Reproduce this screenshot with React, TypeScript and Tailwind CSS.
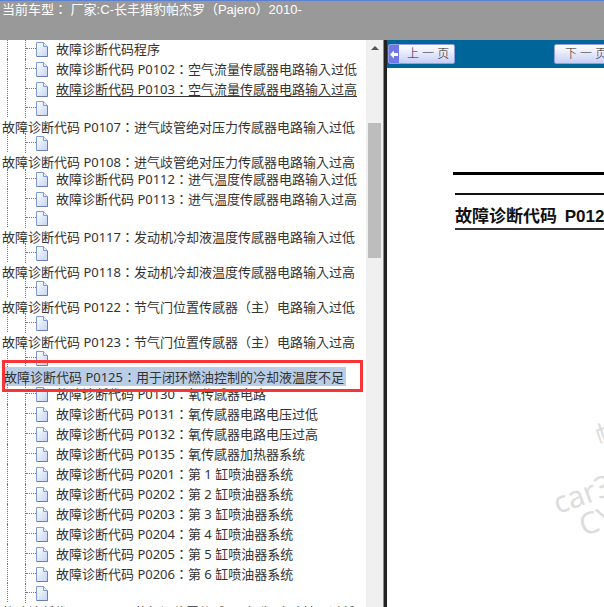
const FONT = { fontFamily: '"Noto Sans", "Noto Sans CJK TC", sans-serif' }

type Row = {
  kind: 'root' | 'leaf' | 'blank' | 'selected'
  text?: string
  h: string
  underline?: boolean
}

const rows: Row[] = [
  { kind: 'leaf', text: '故障诊断代码程序', h: 'h-5' },
  { kind: 'leaf', text: '故障诊断代码 P0102：空气流量传感器电路输入过低', h: 'h-5' },
  { kind: 'leaf', text: '故障诊断代码 P0103：空气流量传感器电路输入过高', h: 'h-[19px]', underline: true },
  { kind: 'blank', h: 'h-[19px]' },
  { kind: 'root', text: '故障诊断代码 P0107：进气歧管绝对压力传感器电路输入过低', h: 'h-4' },
  { kind: 'blank', h: 'h-[19px]' },
  { kind: 'root', text: '故障诊断代码 P0108：进气歧管绝对压力传感器电路输入过高', h: 'h-[17px]' },
  { kind: 'leaf', text: '故障诊断代码 P0112：进气温度传感器电路输入过低', h: 'h-5' },
  { kind: 'leaf', text: '故障诊断代码 P0113：进气温度传感器电路输入过高', h: 'h-[19px]' },
  { kind: 'blank', h: 'h-[19px]' },
  { kind: 'root', text: '故障诊断代码 P0117：发动机冷却液温度传感器电路输入过低', h: 'h-4' },
  { kind: 'blank', h: 'h-[19px]' },
  { kind: 'root', text: '故障诊断代码 P0118：发动机冷却液温度传感器电路输入过高', h: 'h-4' },
  { kind: 'blank', h: 'h-[19px]' },
  { kind: 'root', text: '故障诊断代码 P0122：节气门位置传感器（主）电路输入过低', h: 'h-4' },
  { kind: 'blank', h: 'h-[19px]' },
  { kind: 'root', text: '故障诊断代码 P0123：节气门位置传感器（主）电路输入过高', h: 'h-4' },
  { kind: 'blank', h: 'h-[19px]' },
  { kind: 'selected', text: '故障诊断代码 P0125：用于闭环燃油控制的冷却液温度不足', h: 'h-[17px]' },
  { kind: 'leaf', text: '故障诊断代码 P0130：氧传感器电路', h: 'h-5' },
  { kind: 'leaf', text: '故障诊断代码 P0131：氧传感器电路电压过低', h: 'h-5' },
  { kind: 'leaf', text: '故障诊断代码 P0132：氧传感器电路电压过高', h: 'h-5' },
  { kind: 'leaf', text: '故障诊断代码 P0135：氧传感器加热器系统', h: 'h-5' },
  { kind: 'leaf', text: '故障诊断代码 P0201：第 1 缸喷油器系统', h: 'h-5' },
  { kind: 'leaf', text: '故障诊断代码 P0202：第 2 缸喷油器系统', h: 'h-5' },
  { kind: 'leaf', text: '故障诊断代码 P0203：第 3 缸喷油器系统', h: 'h-5' },
  { kind: 'leaf', text: '故障诊断代码 P0204：第 4 缸喷油器系统', h: 'h-5' },
  { kind: 'leaf', text: '故障诊断代码 P0205：第 5 缸喷油器系统', h: 'h-5' },
  { kind: 'leaf', text: '故障诊断代码 P0206：第 6 缸喷油器系统', h: 'h-[19px]' },
  { kind: 'blank', h: 'h-[19px]' },
  { kind: 'root', text: '故障诊断代码 P0221：节气门位置传感器（副）电路输入过低', h: 'h-5' },
]

function PageIcon() {
  return (
    <svg width="12" height="15" viewBox="0 0 12 15" className="shrink-0">
      <defs>
        <linearGradient id="pg" x1="0" y1="0" x2="1" y2="1">
          <stop offset="0" stopColor="#ffffff" />
          <stop offset="1" stopColor="#c4d4f2" />
        </linearGradient>
      </defs>
      <path d="M0.5 0.5H7.5L11.5 4.5V14.5H0.5Z" fill="url(#pg)" stroke="#7f9bd6" />
      <path d="M7.5 0.5V4.5H11.5" fill="#e8eefb" stroke="#7f9bd6" />
      <path d="M1 14.5H11.5V5" fill="none" stroke="#6a7fb0" />
    </svg>
  )
}

function TreeRow({ row }: { row: Row }) {
  if (row.kind === 'root') {
    return (
      <div className={row.h}>
        <div className="h-5 pl-0.5 text-[13px] leading-5 whitespace-nowrap text-[#333]">{row.text}</div>
      </div>
    )
  }
  if (row.kind === 'selected') {
    return (
      <div className={row.h}>
        <div className="h-5 pl-[4px] text-[13px] leading-5 whitespace-nowrap text-[#333]">
          <span className="inline-block h-[19px] bg-[#b9cde6] pr-0.5">{row.text}</span>
        </div>
      </div>
    )
  }
  return (
    <div className={`flex ${row.h}`}>
      <div className="ml-[7px] w-[18px] border-l border-dotted border-[#777]" />
      <div className="flex h-5 items-center">
        <div className="h-full w-[11px] border-l border-dotted border-[#777]">
          <div className="mt-[9px] h-0 border-t border-dotted border-[#777]" />
        </div>
        <PageIcon />
        {row.text && (
          <span
            className={`ml-[8px] text-[13px] leading-5 whitespace-nowrap text-[#333] ${
              row.underline ? 'underline underline-offset-2' : ''
            }`}
          >
            {row.text}
          </span>
        )}
      </div>
    </div>
  )
}

function PageButton({ label, arrow }: { label: string; arrow?: boolean }) {
  return (
    <div className="flex h-[20px] w-[67px] shrink-0 items-stretch overflow-hidden rounded-[2px] border border-[#8f9fe0] bg-gradient-to-b from-[#ffffff] to-[#c9cff5]">
      {arrow ? (
        <div className="flex w-[10px] items-center justify-center bg-[#6f78e6]">
          <svg width="8" height="9" viewBox="0 0 8 9">
            <path d="M0 4.5L4 0.5V3H8V6H4V8.5Z" fill="#ffffff" />
          </svg>
        </div>
      ) : (
        <div className="w-[2px]" />
      )}
      <span className="pl-[8px] text-[12px] leading-[18px] font-light whitespace-nowrap text-[#222]">{label}</span>
    </div>
  )
}

export default function App() {
  return (
    <div className="flex h-[607px] w-[604px] flex-col overflow-hidden bg-white" style={FONT}>
      {/* Header */}
      <div
        className="h-10 shrink-0 border-t border-[#5b80d4] bg-[#999999] pl-0.5 text-[13px] leading-[18px] whitespace-nowrap text-white"
        style={{ fontFamily: '"Liberation Sans", "Noto Sans CJK TC", sans-serif' }}
      >
        当前车型： 厂家:C-长丰猎豹帕杰罗（Pajero）2010-
      </div>

      <div className="flex min-h-0 flex-1">
        {/* Tree */}
        <div className="relative w-[366px] shrink-0 overflow-hidden">
          <div className="-mt-px">
            {rows.map((row, i) => (
              <TreeRow key={i} row={row} />
            ))}
          </div>
          <div className="absolute top-[320px] left-[2px] h-[32px] w-[361px] border-[3px] border-[#f83434]" />
        </div>

        {/* Scrollbar */}
        <div className="w-[17px] shrink-0 bg-[#f0f0f0] px-0.5">
          <div className="flex h-[83px] justify-center pt-[6px]">
            <div className="h-0 w-0 border-x-[4px] border-b-[4px] border-x-transparent border-b-[#555]" />
          </div>
          <div className="h-[135px] bg-[#bdbdbd]" />
        </div>

        {/* Divider */}
        <div className="w-[4px] shrink-0 border-l border-[#8a8a8a] bg-[#222]" />

        {/* Content */}
        <div className="relative min-w-0 flex-1 overflow-hidden">
          <div className="flex h-7 items-start gap-[99px] bg-[#006699] pt-1 pl-px">
            <PageButton label="上 一 页" arrow />
            <PageButton label="下 一 页" />
          </div>
          <div className="pt-[104px] pl-[66px]">
            <div className="h-[3px] w-[200px] bg-black" />
            <div className="mt-[18px] ml-0.5 h-0.5 w-[200px] bg-[#111]" />
            <div
              className="ml-0.5 h-[35px] w-[200px] border-b-2 border-[#333] text-[17px] leading-[44px] font-bold whitespace-nowrap text-[#111] [word-spacing:3px]"
              style={{ fontFamily: '"Liberation Sans", "Noto Sans CJK SC", sans-serif' }}
            >
              故障诊断代码 P0125：用于闭环燃油控制的冷却液温度不足
            </div>
          </div>

          {/* Watermark */}
          <div className="absolute top-[369px] left-[207px] rotate-[-20deg] text-[28px] leading-none whitespace-nowrap text-[#dddddd]">
            帕杰罗
          </div>
          <div className="absolute top-[421px] left-[162px] rotate-[-20deg] text-[30px] leading-none whitespace-nowrap text-[#dddddd]">
            car388.com
          </div>
          <div className="absolute top-[465px] left-[192px] rotate-[-20deg] text-[30px] leading-none whitespace-nowrap text-[#dddddd]">
            CY
          </div>
        </div>
      </div>
    </div>
  )
}
